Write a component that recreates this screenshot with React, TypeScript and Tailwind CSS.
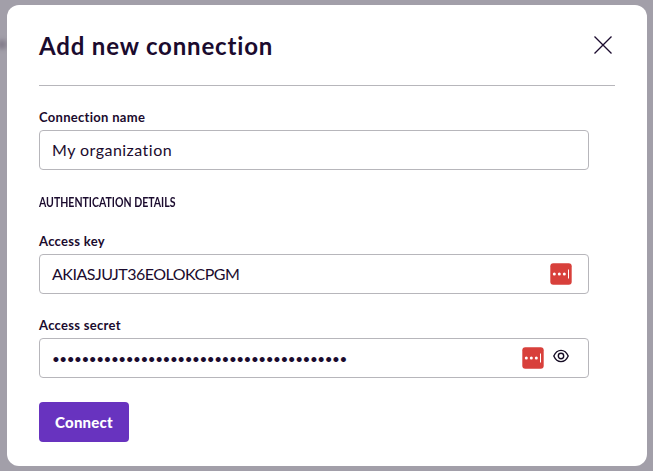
import type { ReactNode } from "react";

function Field({ label, children, icons }: { label: string; children: ReactNode; icons?: ReactNode }) {
  return (
    <div className="flex w-[550px] flex-col">
      <label className="h-[18px] whitespace-nowrap text-[13px] leading-[18px] font-bold tracking-[0.3px]">{label}</label>
      <div className="mt-1 flex h-10 items-center justify-between rounded border border-[#b7b6bb] pl-3">
        {children}
        {icons}
      </div>
    </div>
  );
}

function PasswordManagerIcon() {
  return (
    <svg width="22" height="22" viewBox="0 0 22 22">
      <rect x="0.3" y="0.3" width="21.4" height="21.4" rx="3" fill="#d8403b" />
      <circle cx="4.3" cy="11" r="1.5" fill="white" />
      <circle cx="9.3" cy="11" r="1.5" fill="white" />
      <circle cx="14.3" cy="11" r="1.5" fill="white" />
      <rect x="18" y="6.5" width="1" height="9" fill="white" />
    </svg>
  );
}

function EyeIcon() {
  return (
    <svg width="16" height="14" viewBox="0 0 16 14" fill="none" stroke="#150c24" strokeWidth="1.4">
      <path d="M0.8 7C2.5 3.1 5 1.4 8 1.4S13.5 3.1 15.2 7C13.5 10.9 11 12.6 8 12.6S2.5 10.9 0.8 7Z" />
      <circle cx="8" cy="7" r="2.7" />
    </svg>
  );
}

export default function App() {
  return (
    <div className="relative h-[471px] w-[653px] overflow-hidden bg-[#a29fa9] pt-[5px] pl-[7px] font-['Lato',sans-serif] text-[#1b0b2e] [font-variant-ligatures:none]">
      <div className="absolute top-[40px] -left-[3px] h-[9px] w-[10px] rounded bg-[#857f8d] blur-[2px]" />
      <div className="relative flex h-[461px] w-[640px] flex-col rounded-xl bg-white px-8">
        <header className="flex h-[81px] w-[576px] shrink-0 items-center justify-between border-b border-[#b7b6bb] pr-[2px]">
          <h1 className="pt-px whitespace-nowrap text-[24px] leading-8 font-bold tracking-[0.83px]">Add new connection</h1>
          <svg width="20" height="20" viewBox="0 0 20 20" stroke="#1b0b2e" strokeWidth="1.3">
            <path d="M1.5 1.5L18.5 18.5M18.5 1.5L1.5 18.5" />
          </svg>
        </header>
        <main className="flex flex-col pt-[22px]">
          <Field label="Connection name">
            <span className="text-[16px] leading-6 tracking-[0.47px]">My organization</span>
          </Field>
          <h2 className="mt-6 h-4 origin-left scale-x-[0.81] whitespace-nowrap text-[13px] leading-4 font-bold">AUTHENTICATION DETAILS</h2>
          <div className="mt-[22px]">
            <Field label="Access key" icons={<div className="mr-4"><PasswordManagerIcon /></div>}>
              <span className="text-[16px] leading-6 tracking-[-0.5px]">AKIASJUJT36EOLOKCPGM</span>
            </Field>
          </div>
          <div className="mt-[22px]">
            <Field
              label="Access secret"
              icons={
                <div className="mr-[19px] flex items-center gap-[9px]">
                  <PasswordManagerIcon />
                  <div className="pb-1"><EyeIcon /></div>
                </div>
              }
            >
              <span className="pt-px text-[13.5px] leading-6 tracking-[-0.46px]">{"•".repeat(40)}</span>
            </Field>
          </div>
          <button className="mt-6 h-10 w-[90px] rounded bg-[#6833bf] text-[15px] leading-5 font-black tracking-[0.2px] text-white">Connect</button>
        </main>
      </div>
    </div>
  );
}
